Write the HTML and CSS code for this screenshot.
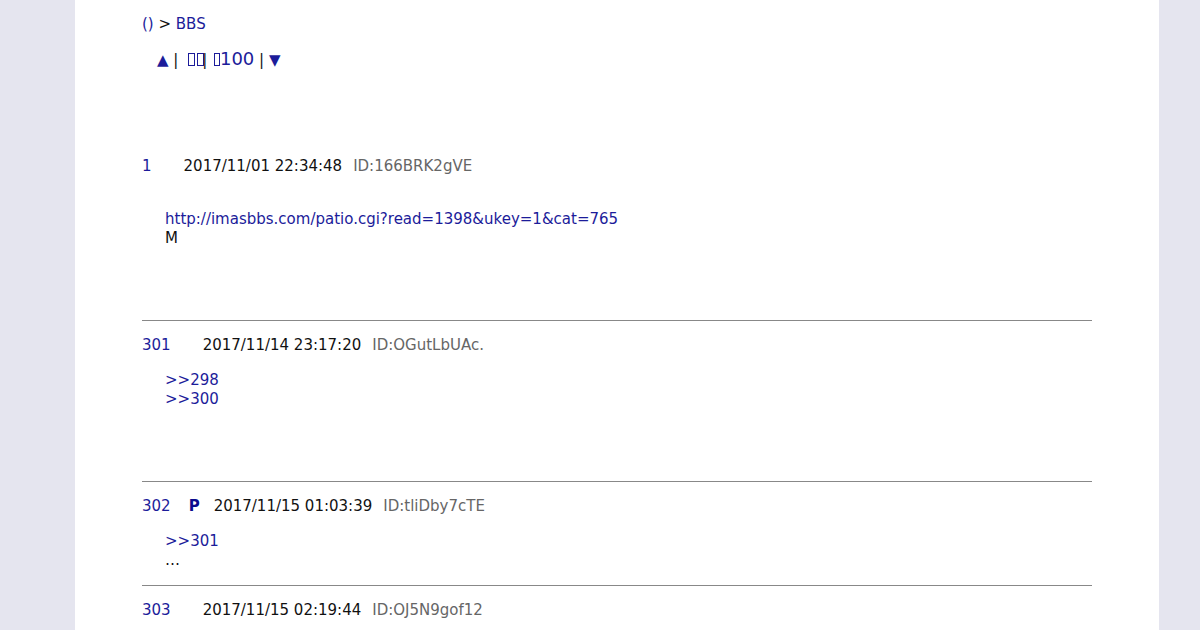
FILE: index.html
```html
<!DOCTYPE html>
<html lang="ja">
<head>
<meta charset="utf-8">
<title>BBS</title>
<link rel="stylesheet" href="styles.css">
</head>
<body>
<div class="page">
  <div class="crumb"><a href="#">()</a> &gt; <a href="#">BBS</a></div>
  <div class="nav"><a href="#">▲</a> | <a class="big" href="#"><span class="tofu first-box"></span><span class="tofu tight"></span></a>| <a class="big" href="#"><span class="tofu narrow"></span>100</a> | <a href="#">▼</a></div>

  <div class="post first">
    <div class="head"><a class="num" href="#">1</a><span class="name"></span><span class="date">2017/11/01 22:34:48</span><span class="id">ID:166BRK2gVE</span></div>
    <div class="body"><br><a href="#">http://imasbbs.com/patio.cgi?read=1398&amp;ukey=1&amp;cat=765</a><br>M<br><br><br><br></div>
  </div>

  <div class="post">
    <div class="head"><a class="num" href="#">301</a><span class="name"></span><span class="date">2017/11/14 23:17:20</span><span class="id">ID:OGutLbUAc.</span></div>
    <div class="body"><a href="#">&gt;&gt;298</a><br><a href="#">&gt;&gt;300</a><br><br><br><br></div>
  </div>

  <div class="post">
    <div class="head"><a class="num" href="#">302</a><span class="name"><b>P</b></span><span class="date">2017/11/15 01:03:39</span><span class="id">ID:tliDby7cTE</span></div>
    <div class="body"><a href="#">&gt;&gt;301</a><br>…</div>
  </div>

  <div class="post">
    <div class="head"><a class="num" href="#">303</a><span class="name"></span><span class="date">2017/11/15 02:19:44</span><span class="id">ID:OJ5N9gof12</span></div>
    <div class="body"></div>
  </div>
</div>
</body>
</html>
```

FILE: styles.css
```css
html, body {
  margin: 0;
  padding: 0;
}
body {
  background: #e5e5ef;
  font-family: "DejaVu Sans", sans-serif;
  font-size: 15px;
  line-height: 19px;
  color: #111;
}
a {
  color: #1c1c9a;
  text-decoration: none;
}
.page {
  box-sizing: border-box;
  width: 1084px;
  min-height: 630px;
  margin-left: 75px;
  background: #fff;
  padding: 15px 67px 0;
}
.crumb {
  margin-bottom: 17px;
}
.nav {
  padding-left: 15px;
  margin-bottom: 87px;
  height: 19px;
}
.nav .big {
  font-size: 18px;
  line-height: 14px;
}
.tofu {
  display: inline-block;
  box-sizing: border-box;
  width: 7px;
  height: 13px;
  border: 1px solid currentColor;
  margin-right: 2px;
  vertical-align: -1px;
}
.tofu.first-box {
  margin-left: 5px;
}
.tofu.tight {
  margin-right: -2px;
}
.tofu.narrow {
  width: 6px;
  margin-left: 2px;
  margin-right: 0;
}
.post {
  border-top: 1px solid #888;
  padding-top: 15px;
}
.post.first {
  border-top: none;
  padding-top: 0;
}
.head {
  display: flex;
  white-space: nowrap;
}
.num {
  margin-right: 18px;
}
.name {
  margin-right: 14px;
  color: #0a0a8c;
}
.date {
  color: #111;
  margin-right: 11px;
}
.id {
  color: #666;
}
.body {
  padding-left: 23px;
  margin-top: 16px;
  margin-bottom: 15px;
}
.post.first .body {
  margin-top: 15px;
}
```
